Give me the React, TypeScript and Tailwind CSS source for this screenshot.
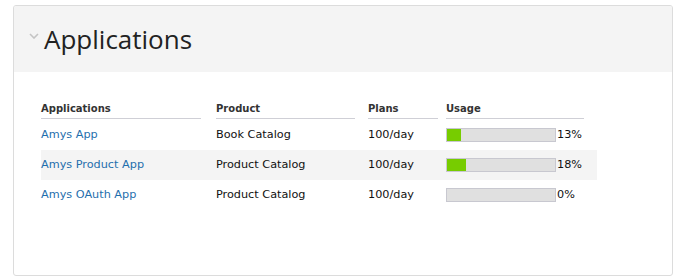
const rows = [
  { name: "Amys App", product: "Book Catalog", plan: "100/day", usage: 13 },
  { name: "Amys Product App", product: "Product Catalog", plan: "100/day", usage: 18 },
  { name: "Amys OAuth App", product: "Product Catalog", plan: "100/day", usage: 0 },
];

export default function App() {
  return (
    <div className="w-[681px] h-[278px] bg-white pt-[5px] pl-[13px]">
      <div className="w-[660px] h-[271px] border border-[#dcdcdc] rounded-[3px] overflow-hidden">
        {/* header */}
        <div className="h-[66px] bg-[#f4f4f4] flex items-center pl-[15px]">
          <svg width="10" height="6" viewBox="0 0 10 6" className="mr-[5px] -mt-[6px]">
            <path d="M1 1l4 4 4-4" fill="none" stroke="#c4c4c4" strokeWidth="1.6" />
          </svg>
          <h1 className="text-[26px] text-[#222] font-['Open_Sans',sans-serif] leading-none -mt-[1px]">Applications</h1>
        </div>

        {/* table */}
        <div className="pl-[27px] pt-[23px] font-['DejaVu_Sans',sans-serif] text-[11.25px]">
          <div className="w-[556px]">
            <div className="flex h-[24px] text-[10px] font-bold text-[#333]">
              <div className="w-[175px]"><div className="w-[160px] h-full border-b border-[#cfcfd6] pt-[6px]">Applications</div></div>
              <div className="w-[152px]"><div className="w-[139px] h-full border-b border-[#cfcfd6] pt-[6px]">Product</div></div>
              <div className="w-[78px]"><div className="w-[70px] h-full border-b border-[#cfcfd6] pt-[6px]">Plans</div></div>
              <div className="w-[151px]"><div className="w-[138px] h-full border-b border-[#cfcfd6] pt-[6px]">Usage</div></div>
            </div>
            {rows.map((r, i) => (
              <div key={r.name} className={`flex items-center h-[30px] ${i === 1 ? "bg-[#f4f4f4]" : ""} ${i === 0 ? "mt-[1px]" : ""}`}>
                <div className="w-[175px] text-[#1f6fad]">{r.name}</div>
                <div className="w-[152px] text-[#111]">{r.product}</div>
                <div className="w-[78px] text-[#111]">{r.plan}</div>
                <div className="w-[151px] flex items-center">
                  <div className="w-[110px] h-[14px] border border-[#c8c8d0] bg-[#e0e0e0] mr-[1px]">
                    <div className="h-full bg-[#77cc00]" style={{ width: `${r.usage}%` }} />
                  </div>
                  <span className="text-[#111]">{r.usage}%</span>
                </div>
              </div>
            ))}
          </div>
        </div>
      </div>
    </div>
  );
}
